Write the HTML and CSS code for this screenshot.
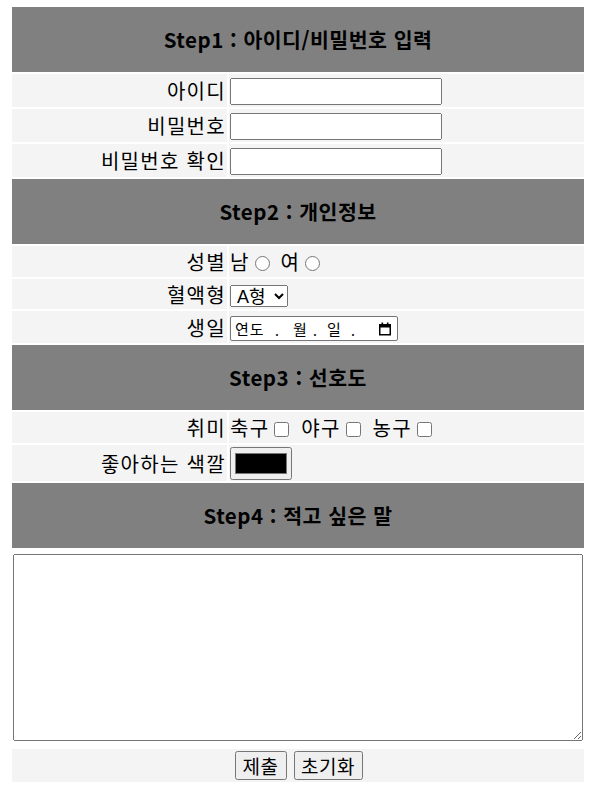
FILE: index.html
```html
<!DOCTYPE html>
<html lang="ko">
<head>
<meta charset="utf-8">
<title>회원가입</title>
<link rel="stylesheet" href="styles.css">
</head>
<body>
<form class="form">
<table class="tbl">
  <colgroup><col class="c1"><col class="c2"></colgroup>
  <tr class="hdr"><th colspan="2">Step1 : 아이디/비밀번호 입력</th></tr>
  <tr class="h33"><td class="lbl">아이디</td><td class="fld"><input class="txt" type="text"></td></tr>
  <tr class="h33"><td class="lbl">비밀번호</td><td class="fld"><input class="txt" type="password"></td></tr>
  <tr class="h33"><td class="lbl">비밀번호 확인</td><td class="fld"><input class="txt" type="password"></td></tr>
  <tr class="hdr"><th colspan="2">Step2 : 개인정보</th></tr>
  <tr class="h31"><td class="lbl">성별</td><td class="fld">남<input class="rad" type="radio" name="g"> 여<input class="rad" type="radio" name="g"></td></tr>
  <tr class="h30"><td class="lbl">혈액형</td><td class="fld"><select class="sel"><option>A형</option><option>B형</option><option>O형</option><option>AB형</option></select></td></tr>
  <tr class="h32"><td class="lbl">생일</td><td class="fld"><span class="date"><span class="dpart d1">연도</span><span class="ddot t1">.</span><span class="dpart d2">월</span><span class="ddot t2">.</span><span class="dpart d3">일</span><span class="ddot t3">.</span><svg class="cal" width="14" height="14" viewBox="0 0 14 14"><rect x="1.75" y="2.75" width="10.5" height="10" fill="none" stroke="#000" stroke-width="1.5"/><rect x="1" y="2" width="12" height="3.5" fill="#000"/><rect x="3.5" y="0.5" width="1.6" height="3" fill="#000"/><rect x="8.9" y="0.5" width="1.6" height="3" fill="#000"/></svg></span></td></tr>
  <tr class="hdr"><th colspan="2">Step3 : 선호도</th></tr>
  <tr class="h31"><td class="lbl">취미</td><td class="fld">축구<input class="chk" type="checkbox"> 야구<input class="chk" type="checkbox"> 농구<input class="chk" type="checkbox"></td></tr>
  <tr class="h36"><td class="lbl">좋아하는 색깔</td><td class="fld"><input class="clr" type="color" value="#000000"></td></tr>
  <tr class="hdr"><th colspan="2">Step4 : 적고 싶은 말</th></tr>
  <tr class="hta"><td class="tacell" colspan="2"><textarea class="ta"></textarea></td></tr>
  <tr class="h33"><td class="btncell" colspan="2"><div class="btns"><button type="submit" class="btn b1">제출</button><button type="reset" class="btn b2">초기화</button></div></td></tr>
</table>
</form>
</body>
</html>
```
FILE: styles.css
```css
html, body {
  margin: 0;
  padding: 0;
  background: #fff;
}
body {
  font-family: "Noto Sans CJK KR", "Noto Sans", sans-serif;
  color: #000;
}
.form {
  margin: 0;
}
.tbl {
  margin: 5px 0 0 10px;
  width: 576px;
  border-spacing: 2px;
  table-layout: fixed;
}
.c1 { width: 215px; }
.tbl th {
  background: #808080;
  font-size: 20.5px;
  font-weight: bold;
  letter-spacing: 0.5px;
  text-align: center;
  padding: 1px;
  line-height: 25px;
}
.tbl td {
  background: #f4f4f4;
  padding: 1px;
  font-size: 20px;
  letter-spacing: 1.3px;
  line-height: 25px;
  vertical-align: middle;
}
.tbl td.lbl {
  text-align: right;
  white-space: nowrap;
  padding-right: 1px;
}
.hdr { height: 65px; }
.h30 { height: 30px; }
.h31 { height: 31px; }
.h32 { height: 32px; }
.h33 { height: 33px; }
.h36 { height: 36px; }
.hta { height: 197px; }

.txt {
  box-sizing: border-box;
  width: 212px;
  height: 27px;
  margin: 0;
  vertical-align: middle;
  font-size: 16px;
}
.rad, .chk {
  box-sizing: border-box;
  width: 15px;
  height: 15px;
  vertical-align: middle;
  margin: 0 4px 2px 5px;
}
.chk {
  margin: 0 5px 2px 5px;
}
.sel {
  box-sizing: border-box;
  width: 58px;
  height: 22px;
  margin: 0;
  padding: 0 0 0 2px;
  font-size: 18px;
  letter-spacing: 0;
  font-family: "Liberation Sans", "Noto Sans CJK KR", sans-serif;
  vertical-align: middle;
}
.date {
  box-sizing: border-box;
  display: inline-flex;
  align-items: center;
  width: 168px;
  height: 25px;
  border: 1px solid #767676;
  border-radius: 2px;
  background: #fff;
  padding: 0 5px 0 4px;
  vertical-align: middle;
  font-size: 15px;
  letter-spacing: 0;
  line-height: 20px;
}
.dpart, .ddot {
  display: inline-block;
  flex: none;
}
.dpart { letter-spacing: 1px; }
.d1 { width: 40px; }
.t1 { width: 18px; }
.d2 { width: 20px; }
.t2 { width: 14px; }
.d3 { width: 24px; }
.t3 { width: 8px; }
.ddot {
  font-size: 14px;
  position: relative;
  top: 1px;
}
.cal {
  margin-left: auto;
}
.clr {
  box-sizing: border-box;
  width: 62px;
  height: 33px;
  margin: 0;
  vertical-align: middle;
}
.tacell {
  padding: 1px;
}
.tbl td.tacell {
  background: #fff;
  vertical-align: top;
}
.ta {
  display: block;
  box-sizing: border-box;
  width: 570px;
  height: 187px;
  margin: 3px 0 0 0;
  resize: both;
}
.tbl td.btncell {
  padding: 0;
  letter-spacing: 0;
}
.btns {
  display: flex;
  justify-content: center;
  gap: 7px;
  padding-left: 1px;
}
.btn {
  box-sizing: border-box;
  height: 29px;
  padding: 0;
  margin: 0;
  font-family: "Noto Sans CJK KR", sans-serif;
  font-size: 19px;
  letter-spacing: 0.5px;
  line-height: 25px;
}
.b1 { width: 52px; }
.b2 { width: 69px; }
```
